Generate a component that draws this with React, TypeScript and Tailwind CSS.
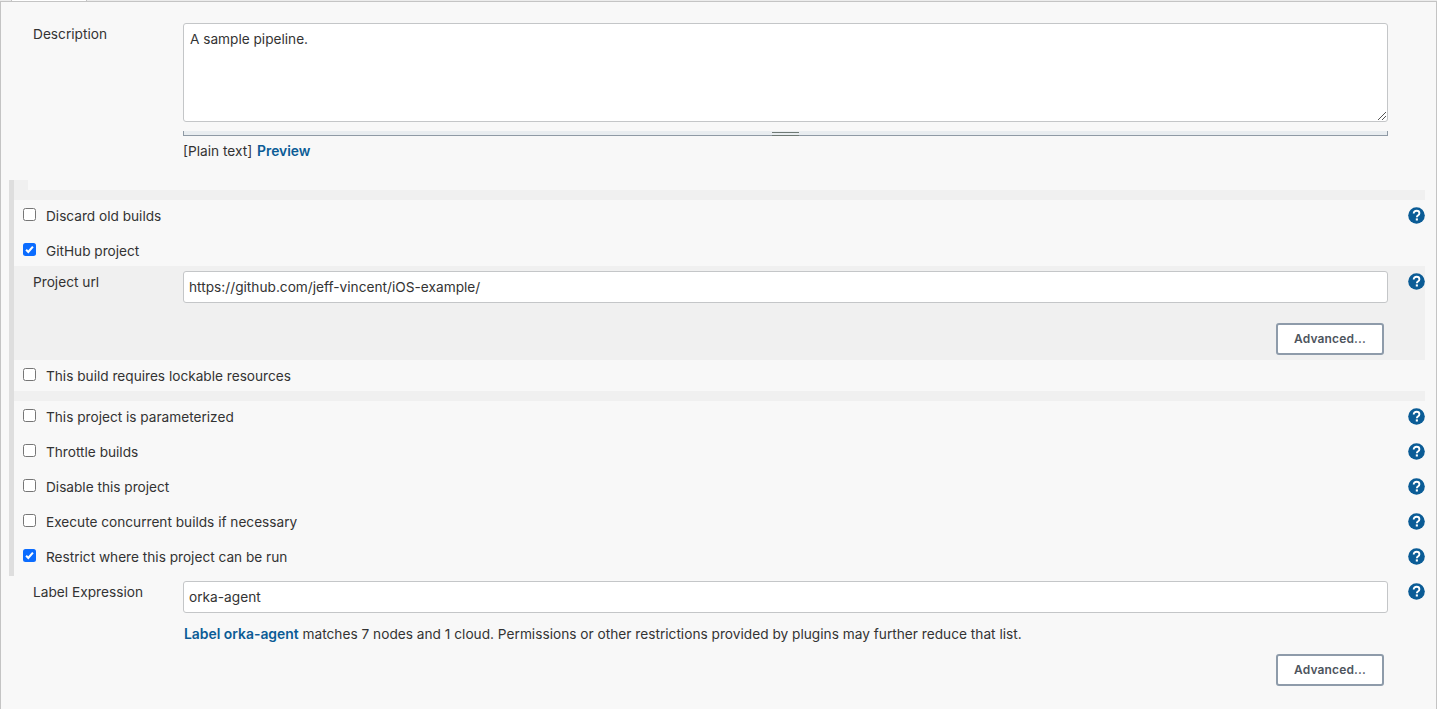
import React from "react";

const font = { fontFamily: "Inter, 'Liberation Sans', sans-serif" };

function Check({ checked }: { checked?: boolean }) {
  return checked ? (
    <span className="flex h-[13px] w-[13px] shrink-0 items-center justify-center rounded-[2.5px] bg-[#0b6cff]">
      <svg width="11" height="11" viewBox="0 0 11 11" fill="none">
        <path d="M2.1 5.8 4.3 8 8.9 2.6" stroke="#fff" strokeWidth="2.1" />
      </svg>
    </span>
  ) : (
    <span className="block h-[13px] w-[13px] shrink-0 rounded-[2.5px] border border-[#767676] bg-white" />
  );
}

function Help() {
  return (
    <svg width="17" height="17" viewBox="0 0 17 17" className="block">
      <circle cx="8.5" cy="8.5" r="8.3" fill="#0b5c96" />
      <path d="M5.7 6.6c0-1.7 1.2-2.8 2.9-2.8 1.6 0 2.8 1 2.8 2.4 0 1.2-.7 1.8-1.5 2.3-.7.5-1 .9-1 1.7" fill="none" stroke="#fff" strokeWidth="1.9" />
      <rect x="7.8" y="11.4" width="2.1" height="2.1" fill="#fff" />
    </svg>
  );
}

function OptionRow({ label, checked, help = true, h = "h-[35px]" }: { label: string; checked?: boolean; help?: boolean; h?: string }) {
  return (
    <div className={`flex items-end ${h} pl-[9px]`}>
      <span className="mb-[10px]">
        <Check checked={checked} />
      </span>
      <span className="mb-[5px] ml-[10px] flex-1 text-[13.65px] leading-[20px] text-[#333]">{label}</span>
      {help && (
        <span className="mb-[7px] mr-[0.5px]">
          <Help />
        </span>
      )}
    </div>
  );
}

function Advanced() {
  return (
    <button className="flex h-[32px] w-[108px] items-center justify-center rounded-[3px] border-2 border-[#8e9baa] bg-white text-[12px] font-semibold tracking-[0.15px] text-[#4d545d]">
      Advanced...
    </button>
  );
}

function FieldInput({ value }: { value: string }) {
  return (
    <div className="flex h-[32px] w-[1205px] shrink-0 items-center rounded-[3px] border border-[#c4c6c8] bg-white pl-[5px] text-[13.7px] text-[#333]">
      {value}
    </div>
  );
}

export default function App() {
  return (
    <div className="mr-[1px] h-[709px] overflow-hidden" style={font}>
      <div className="flex h-[1px]">
        <div className="w-[11px] bg-[#ececec]" />
        <div className="w-[1px] bg-[#c4c4c4]" />
        <div className="w-[74px] bg-white" />
        <div className="w-[1px] bg-[#c4c4c4]" />
        <div className="flex-1 bg-[#ececec]" />
      </div>
      <div className="h-full border-x border-t border-[#c4c4c4] bg-[#f8f8f8]">
        <div className="flex pt-[21px]">
          <div className="w-[182px] shrink-0 pl-[32px] pt-[1px] text-[13.7px] leading-[20px] text-[#333]">Description</div>
          <div className="w-[1205px]">
            <div className="relative h-[99px] rounded-[3px] border border-[#c4c6c8] bg-white px-[6px] py-[2px] text-[13.65px] leading-[20px] text-[#333]">
              <div className="pt-[3px]">A sample pipeline.</div>
              <svg width="11" height="11" viewBox="0 0 11 11" className="absolute bottom-0 right-0">
                <path d="M2 10 10 2M6 10l4-4" stroke="#555" strokeWidth="1" fill="none" />
              </svg>
            </div>
            <div className="mt-[9px] flex h-[5px] justify-center border-x border-b border-[#8f9aa5] bg-[#e9edf0]">
              <span className="mt-[1px] block h-[4px] w-[27px] border-y border-[#6f7a75]" />
            </div>
            <div className="mt-[5px] text-[13.7px] leading-[20px] text-[#333]">
              [Plain text] <a className="ml-[1px] text-[13.85px] font-semibold text-[#0b5c96]">Preview</a>
            </div>
          </div>
        </div>

        <div className="ml-[8px] mt-[19px] w-[1416px] border-l-[5px] border-[#dedede] pb-[4px]">
          <div className="h-[10px] w-[14px] bg-[#f0f0f0]" />
          <div className="h-[10px] bg-[#f0f0f0]" />
          <OptionRow label="Discard old builds" h="h-[31px]" />
          <OptionRow label="GitHub project" checked help={false} />
          <div className="bg-[#f0f0f0]">
            <div className="flex pt-[5px]">
              <div className="w-[169px] shrink-0 pl-[19px] pt-[1px] text-[13.7px] leading-[20px] text-[#333]">Project url</div>
              <FieldInput value="https://github.com/jeff-vincent/iOS-example/" />
              <span className="ml-[19.5px] mt-[2px]"><Help /></span>
            </div>
            <div className="flex justify-end pb-[5px] pr-[41px] pt-[20px]">
              <Advanced />
            </div>
          </div>
          <OptionRow label="This build requires lockable resources" help={false} h="h-[31px]" />
          <div className="h-[10px] bg-[#f0f0f0]" />
          <OptionRow label="This project is parameterized" h="h-[31px]" />
          <OptionRow label="Throttle builds" />
          <OptionRow label="Disable this project" />
          <OptionRow label="Execute concurrent builds if necessary" />
          <OptionRow label="Restrict where this project can be run" checked />
        </div>

        <div className="ml-[13px] w-[1411px]">
          <div className="flex pt-[5px]">
            <div className="w-[169px] shrink-0 pl-[19px] pt-[1px] text-[13.7px] leading-[20px] text-[#333]">Label Expression</div>
            <FieldInput value="orka-agent" />
            <span className="ml-[19.5px] mt-[2px]"><Help /></span>
          </div>
          <div className="ml-[170px] mt-[11px] text-[13.7px] leading-[20px] text-[#333]">
            <a className="text-[13.9px] font-semibold text-[#0b5c96]">Label orka-agent</a> matches 7 nodes and 1 cloud. Permissions or other restrictions provided by plugins may further reduce that list.
          </div>
          <div className="flex justify-end pr-[41px] pt-[10px]">
            <Advanced />
          </div>
        </div>
      </div>
    </div>
  );
}
